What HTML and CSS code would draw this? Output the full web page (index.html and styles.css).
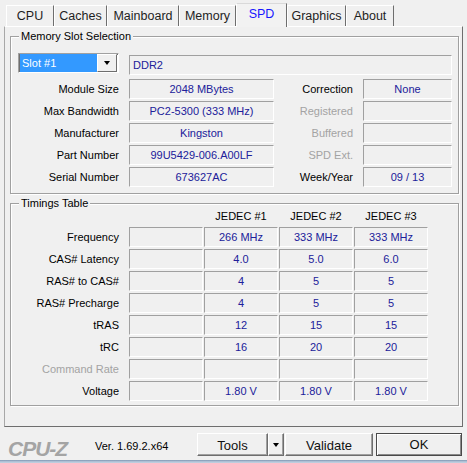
FILE: index.html
```html
<!DOCTYPE html>
<html>
<head>
<meta charset="utf-8">
<title>CPU-Z</title>
<link rel="stylesheet" href="styles.css">
</head>
<body>
<div class="win">
  <div class="tabs">
    <div class="tab t-cpu">CPU</div>
    <div class="tab t-caches">Caches</div>
    <div class="tab t-main">Mainboard</div>
    <div class="tab t-mem">Memory</div>
    <div class="tab t-spd active">SPD</div>
    <div class="tab t-gfx">Graphics</div>
    <div class="tab t-about">About</div>
  </div>
  <div class="panel">
    <div class="group">
      <div class="gtitle">Memory Slot Selection</div>
      <div class="spd">
        <div class="combo">
          <span class="combo-val">Slot #1</span>
          <span class="combo-btn"><span class="arrow"></span></span>
        </div>
        <div class="box ddr">DDR2</div>

        <div class="lbl">Module Size</div>
        <div class="box">2048 MBytes</div>
        <div class="lbl">Correction</div>
        <div class="box">None</div>

        <div class="lbl">Max Bandwidth</div>
        <div class="box">PC2-5300 (333 MHz)</div>
        <div class="lbl dis">Registered</div>
        <div class="box"></div>

        <div class="lbl">Manufacturer</div>
        <div class="box">Kingston</div>
        <div class="lbl dis">Buffered</div>
        <div class="box"></div>

        <div class="lbl">Part Number</div>
        <div class="box">99U5429-006.A00LF</div>
        <div class="lbl dis">SPD Ext.</div>
        <div class="box"></div>

        <div class="lbl">Serial Number</div>
        <div class="box">673627AC</div>
        <div class="lbl">Week/Year</div>
        <div class="box">09 / 13</div>
      </div>
    </div>

    <div class="group g-tim">
      <div class="gtitle">Timings Table</div>
      <div class="tim">
        <div></div>
        <div></div>
        <div class="hd">JEDEC #1</div>
        <div class="hd">JEDEC #2</div>
        <div class="hd">JEDEC #3</div>

        <div class="lbl">Frequency</div>
        <div class="box"></div>
        <div class="box">266 MHz</div>
        <div class="box">333 MHz</div>
        <div class="box">333 MHz</div>

        <div class="lbl">CAS# Latency</div>
        <div class="box"></div>
        <div class="box">4.0</div>
        <div class="box">5.0</div>
        <div class="box">6.0</div>

        <div class="lbl">RAS# to CAS#</div>
        <div class="box"></div>
        <div class="box">4</div>
        <div class="box">5</div>
        <div class="box">5</div>

        <div class="lbl">RAS# Precharge</div>
        <div class="box"></div>
        <div class="box">4</div>
        <div class="box">5</div>
        <div class="box">5</div>

        <div class="lbl">tRAS</div>
        <div class="box"></div>
        <div class="box">12</div>
        <div class="box">15</div>
        <div class="box">15</div>

        <div class="lbl">tRC</div>
        <div class="box"></div>
        <div class="box">16</div>
        <div class="box">20</div>
        <div class="box">20</div>

        <div class="lbl dis">Command Rate</div>
        <div class="box"></div>
        <div class="box"></div>
        <div class="box"></div>
        <div class="box"></div>

        <div class="lbl">Voltage</div>
        <div class="box"></div>
        <div class="box">1.80 V</div>
        <div class="box">1.80 V</div>
        <div class="box">1.80 V</div>
      </div>
    </div>
  </div>

  <div class="footer">
    <div class="logo">CPU-Z</div>
    <div class="ver">Ver. 1.69.2.x64</div>
    <div class="buttons">
      <div class="btn b-tools">Tools</div>
      <div class="btn b-arrow"><span class="arrow"></span></div>
      <div class="btn b-validate">Validate</div>
      <div class="btn b-ok">OK</div>
    </div>
  </div>
  <div class="edge"></div>
</div>
</body>
</html>
```

FILE: styles.css
```css
html, body {
  margin: 0;
  padding: 0;
  background: #f0f0f0;
}

body {
  width: 467px;
  height: 463px;
  overflow: hidden;
  font-family: "Liberation Sans", Arial, sans-serif;
  font-size: 11px;
  color: #000;
}

.win {
  padding-top: 3px;
}

/* ---------- tabs ---------- */
.tabs {
  display: flex;
  align-items: flex-end;
  height: 23px;
  padding-left: 6px;
}

.tab {
  box-sizing: border-box;
  height: 21px;
  border: 1px solid #fff;
  border-bottom: 0;
  border-right-color: #6e6e6e;
  text-align: center;
  font-size: 12.5px;
  line-height: 21px;
  color: #1e1e1e;
  white-space: nowrap;
  overflow: hidden;
}

.t-cpu { width: 48px; }
.t-caches { width: 53px; }
.t-main { width: 72px; }
.t-mem { width: 57px; }
.t-spd { width: 51px; }
.t-gfx { width: 59px; }
.t-about { width: 48px; }

.tab.active {
  height: 24px;
  margin-bottom: -1px;
  position: relative;
  z-index: 1;
  background: #f2f2f2;
  border-color: #d9d9d9 #6e6e6e #d9d9d9 #fff;
  color: #1818ff;
}

/* ---------- panel ---------- */
.panel {
  box-sizing: border-box;
  margin-left: 4px;
  width: 459px;
  height: 401px;
  border: 1px solid;
  border-color: #fff #6e6e6e #6e6e6e #a8a8a8;
  padding: 9px 3px 0 5px;
}

.group {
  border: 1px solid #a0a0a0;
  box-shadow: 1px 1px 0 #fff, inset 1px 1px 0 #fff;
}

.g-tim {
  margin-top: 9px;
}

.gtitle {
  width: max-content;
  margin: -7px 0 0 8px;
  padding: 0 2px;
  background: #f0f0f0;
  line-height: 13px;
  white-space: nowrap;
}

/* ---------- SPD grid ---------- */
.spd {
  display: grid;
  grid-template-columns: 108px 145px 69px 89px;
  column-gap: 10px;
  grid-template-rows: 24px;
  grid-auto-rows: 20px;
  row-gap: 2px;
  margin-top: 10px;
  padding-bottom: 6px;
}

.lbl {
  text-align: right;
  line-height: 20px;
  white-space: nowrap;
  color: #000;
}

.lbl.dis {
  color: #a3a3a3;
}

.box {
  box-sizing: border-box;
  height: 20px;
  border: 1px solid;
  border-color: #a0a0a0 #fff #fff #a0a0a0;
  text-align: center;
  line-height: 18px;
  color: #20209a;
  white-space: nowrap;
  overflow: hidden;
}

.ddr {
  grid-column: 2 / span 3;
  margin-top: 2px;
  text-align: left;
  padding-left: 3px;
}

.combo {
  justify-self: end;
  box-sizing: border-box;
  width: 101px;
  height: 20px;
  display: flex;
  border: 1px solid;
  border-color: #a0a0a0 #fff #fff #a0a0a0;
  box-shadow: inset 1px 1px 0 #6e6e6e;
  padding-left: 1px;
  background: #fff;
}

.combo-val {
  width: 77px;
  background: #3399ff;
  color: #fff;
  line-height: 18px;
  padding-left: 2px;
  box-sizing: border-box;
  white-space: nowrap;
}

.combo-btn {
  box-sizing: border-box;
  width: 20px;
  height: 18px;
  background: #f0f0f0;
  border: 1px solid;
  border-color: #fff #6e6e6e #6e6e6e #fff;
  display: flex;
  align-items: center;
  justify-content: center;
}

.arrow {
  width: 0;
  height: 0;
  border-left: 3.5px solid transparent;
  border-right: 3.5px solid transparent;
  border-top: 4px solid #000;
}

/* ---------- timings grid ---------- */
.tim {
  display: grid;
  grid-template-columns: 117px repeat(4, 74px);
  column-gap: 1px;
  grid-template-rows: 15px;
  grid-auto-rows: 20px;
  row-gap: 2px;
  padding-bottom: 4px;
}

.tim .lbl {
  padding-right: 9px;
}

.hd {
  text-align: center;
  line-height: 13px;
  color: #000;
  white-space: nowrap;
}

/* ---------- footer ---------- */
.footer {
  display: flex;
  align-items: flex-start;
  height: 33px;
  padding-right: 5px;
}

.logo {
  width: 87px;
  margin-top: 11px;
  padding-left: 8px;
  box-sizing: border-box;
  width: 95px;
  font-size: 21px;
  line-height: 21px;
  font-weight: bold;
  font-style: italic;
  letter-spacing: -1px;
  color: #a4a4a4;
  white-space: nowrap;
}

.ver {
  margin-top: 13px;
  line-height: 13px;
  white-space: nowrap;
}

.buttons {
  margin-left: auto;
  margin-top: 6px;
  display: flex;
}

.btn {
  box-sizing: border-box;
  height: 23px;
  border: 1px solid;
  border-color: #fff #6e6e6e #6e6e6e #fff;
  box-shadow: inset -1px -1px 0 #a0a0a0;
  background: #f0f0f0;
  font-size: 13px;
  line-height: 23px;
  text-align: center;
  color: #111;
  white-space: nowrap;
}

.b-tools { width: 71px; }

.b-arrow {
  width: 16px;
  display: flex;
  align-items: center;
  justify-content: center;
}

.b-validate {
  width: 88px;
  margin-left: 1px;
}

.b-ok {
  width: 86px;
  margin-left: 3px;
  border-color: #4a4a4a;
  box-shadow: inset 1px 1px 0 #fff, inset -1px -1px 0 #8a8a8a;
  line-height: 21px;
}

.edge {
  height: 3px;
  background: linear-gradient(#7d93b0, #a9bbd1 40%, #c7d4e3);
}
```
